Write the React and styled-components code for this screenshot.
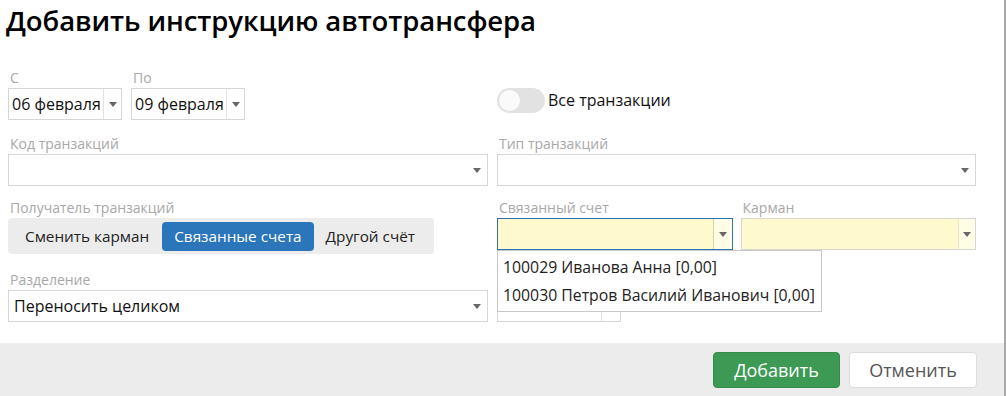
import React from "react";
import styled, { createGlobalStyle } from "styled-components";

const Global = createGlobalStyle`
  html, body { margin: 0; padding: 0; background: #fff; }
  body { font-family: "Open Sans", "Noto Sans", sans-serif; color: #111; }
  * { box-sizing: border-box; }
`;

const Dialog = styled.div`
  width: 1006px;
  height: 396px;
  border-right: 2px solid #a9a9a9;
  display: flex;
  flex-direction: column;
  background: #fff;
  overflow: hidden;
`;

const Title = styled.h1`
  margin: 0;
  padding: 1px 0 0 6px;
  height: 48px;
  font-size: 27.5px;
  font-weight: 600;
  line-height: 40px;
  color: #000;
  letter-spacing: -0.1px;
  white-space: nowrap;
`;

const Body = styled.div`
  flex: 1;
  padding: 20px 28px 0 8px;
  display: flex;
  flex-direction: column;
`;

const Row = styled.div`
  display: grid;
  grid-template-columns: 480px 479px;
  column-gap: 9px;
  margin-top: ${(p) => p.$mt || 0}px;
`;

const Field = styled.div`
  display: flex;
  flex-direction: column;
  width: ${(p) => (p.$w ? `${p.$w}px` : "auto")};
`;

const Label = styled.div`
  font-size: 14px;
  line-height: 20px;
  color: #a8a8a8;
  padding-left: 2px;
  white-space: nowrap;
`;

const Dates = styled.div`
  display: flex;
  gap: 9px;
`;

const Select = styled.div`
  position: relative;
  display: flex;
  height: 32px;
  border: 1px solid ${(p) => (p.$focus ? "#2b73b8" : "#d6d6d6")};
  background: ${(p) => (p.$yellow ? "#fffacd" : "#fff")};
  width: ${(p) => (p.$w ? `${p.$w}px` : "100%")};
`;

const Value = styled.div`
  flex: 1;
  font-size: 16px;
  line-height: 30px;
  padding-left: ${(p) => p.$pl || 5}px;
  color: #111;
  white-space: nowrap;
  overflow: hidden;
`;

const ArrowBox = styled.div`
  width: ${(p) => p.$w || 18}px;
  display: flex;
  align-items: center;
  justify-content: center;
  border-left: ${(p) => (p.$sep ? `1px solid ${p.$sepColor || "#e2e2e2"}` : "none")};
  background: ${(p) => p.$bg || "transparent"};
  &::after {
    content: "";
    border-left: 4px solid transparent;
    border-right: 4px solid transparent;
    border-top: 5px solid #666;
    margin-top: 1px;
  }
`;

const ToggleWrap = styled.div`
  display: flex;
  align-items: center;
  gap: 3px;
  padding-top: 20px;
  margin-top: -8px;
`;

const Switch = styled.div`
  width: 48px;
  height: 25px;
  border-radius: 13px;
  background: #e2e2e2;
  position: relative;
  &::after {
    content: "";
    position: absolute;
    left: 2px;
    top: 2px;
    width: 21px;
    height: 21px;
    border-radius: 50%;
    background: #fafafa;
  }
`;

const ToggleText = styled.span`
  font-size: 16px;
  color: #111;
`;

const Segmented = styled.div`
  display: flex;
  align-items: center;
  height: 36px;
  width: 426px;
  background: #ececec;
  border-radius: 4px;
  padding: 0 4px;
`;

const SegButton = styled.div`
  height: 29px;
  display: flex;
  align-items: center;
  padding: 0 ${(p) => p.$px || 12}px;
  font-size: 15.3px;
  border-radius: 4px;
  background: ${(p) => (p.$active ? "#2b75bb" : "transparent")};
  color: ${(p) => (p.$active ? "#fff" : "#222")};
  white-space: nowrap;
`;

const RightPair = styled.div`
  display: flex;
  gap: 8px;
`;

const DropHost = styled.div`
  position: relative;
`;

const Menu = styled.div`
  position: absolute;
  left: 0;
  top: 32px;
  width: 325px;
  background: #fff;
  border: 1px solid #c8c8c8;
  z-index: 5;
  padding: 2px 0;
`;

const MenuItem = styled.div`
  font-size: 15.8px;
  line-height: 28px;
  padding-left: 5px;
  color: #222;
  white-space: nowrap;
`;

const NumberBox = styled.div`
  display: flex;
  height: 32px;
  width: 124px;
  border: 1px solid #d6d6d6;
  background: #fff;
`;

const NumValue = styled.div`
  flex: 1;
  text-align: right;
  font-size: 16px;
  line-height: 30px;
  padding-right: 5px;
`;

const Spin = styled.div`
  width: 19px;
  border-left: 1px solid #e2e2e2;
`;

const Footer = styled.div`
  height: 53px;
  background: #ececec;
  display: flex;
  justify-content: flex-end;
  align-items: center;
  gap: 9px;
  padding: 0 27px 0 0;
`;

const Button = styled.div`
  height: 36px;
  width: ${(p) => p.$w}px;
  display: flex;
  align-items: center;
  justify-content: center;
  font-size: 18px;
  border-radius: 4px;
  background: ${(p) => (p.$primary ? "#3d9a54" : "#fff")};
  color: ${(p) => (p.$primary ? "#fff" : "#555")};
  border: 1px solid ${(p) => (p.$primary ? "#368a4a" : "#dcdcdc")};
`;

export default function App() {
  return (
    <>
      <Global />
      <Dialog>
        <Title>Добавить инструкцию автотрансфера</Title>
        <Body>
          <Row>
            <Dates>
              <Field $w={114}>
                <Label>С</Label>
                <Select>
                  <Value $pl={3}>06 февраля</Value>
                  <ArrowBox $sep $w={18} />
                </Select>
              </Field>
              <Field $w={114}>
                <Label>По</Label>
                <Select>
                  <Value $pl={3}>09 февраля</Value>
                  <ArrowBox $sep $w={18} />
                </Select>
              </Field>
            </Dates>
            <ToggleWrap>
              <Switch />
              <ToggleText>Все транзакции</ToggleText>
            </ToggleWrap>
          </Row>
          <Row $mt={14}>
            <Field>
              <Label>Код транзакций</Label>
              <Select>
                <Value />
                <ArrowBox $w={20} />
              </Select>
            </Field>
            <Field>
              <Label>Тип транзакций</Label>
              <Select>
                <Value />
                <ArrowBox $w={20} />
              </Select>
            </Field>
          </Row>
          <Row $mt={12}>
            <Field>
              <Label>Получатель транзакций</Label>
              <Segmented>
                <SegButton $px={13}>Сменить карман</SegButton>
                <SegButton $active $px={12}>Связанные счета</SegButton>
                <SegButton $px={12}>Другой счёт</SegButton>
              </Segmented>
            </Field>
            <RightPair>
              <Field $w={236}>
                <Label>Связанный счет</Label>
                <DropHost>
                  <Select $yellow $focus>
                    <Value />
                    <ArrowBox $sep $sepColor="#d8d2a8" $bg="#fffde6" $w={19} />
                  </Select>
                  <Menu>
                    <MenuItem>100029 Иванова Анна [0,00]</MenuItem>
                    <MenuItem>100030 Петров Василий Иванович [0,00]</MenuItem>
                  </Menu>
                </DropHost>
              </Field>
              <Field $w={236}>
                <Label>Карман</Label>
                <Select $yellow>
                  <Value />
                  <ArrowBox $sep $sepColor="#ece6bf" $bg="#fffde6" $w={17} />
                </Select>
              </Field>
            </RightPair>
          </Row>
          <Row $mt={16}>
            <Field>
              <Label>Разделение</Label>
              <Select>
                <Value $pl={5}>Переносить целиком</Value>
                <ArrowBox $w={20} />
              </Select>
            </Field>
            <Field>
              <Label>&nbsp;</Label>
              <NumberBox>
                <NumValue>0</NumValue>
                <Spin />
              </NumberBox>
            </Field>
          </Row>
        </Body>
        <Footer>
          <Button $primary $w={127}>Добавить</Button>
          <Button $w={128}>Отменить</Button>
        </Footer>
      </Dialog>
    </>
  );
}
